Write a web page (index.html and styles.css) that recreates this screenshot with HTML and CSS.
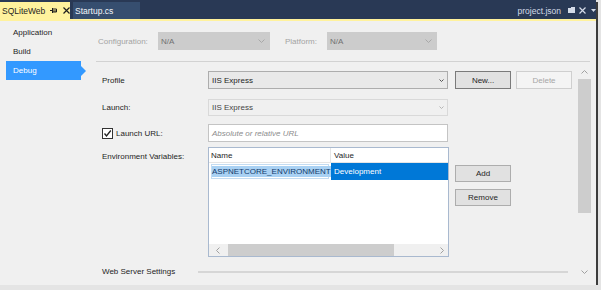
FILE: index.html
```html
<!DOCTYPE html>
<html lang="en">
<head>
  <meta charset="UTF-8" />
  <title>SQLiteWeb - Debug</title>
  <link rel="stylesheet" href="styles.css">
</head>
<body>
  <div class="window">
    <div class="tabbar">
      <div class="tab active">
        <span class="tab-title">SQLiteWeb</span>
        <svg class="pin" width="7" height="7" viewBox="0 0 7 7"><path d="M0 3.5H2.5M2.5 1V6M2.5 2H6.5V5H2.5M2.5 4H6.5" stroke="#1e1e1e" stroke-width="1" fill="none"/></svg>
        <svg class="close" width="7" height="7" viewBox="0 0 7 7"><path d="M0.5 0.5L6.5 6.5M6.5 0.5L0.5 6.5" stroke="#1e1e1e" stroke-width="1.2"/></svg>
      </div>
      <div class="tab plain">Startup.cs</div>
      <div class="spacer"></div>
      <div class="preview">project.json</div>
      <svg class="promote" width="7" height="6" viewBox="0 0 7 6"><path d="M0 1H3V0H7V6H0Z" fill="#d4dbe8"/></svg>
      <svg class="preview-close" width="7" height="7" viewBox="0 0 7 7"><path d="M0.5 0.5L6.5 6.5M6.5 0.5L0.5 6.5" stroke="#d4dbe8" stroke-width="1.2"/></svg>
      <svg class="menu" width="5" height="4" viewBox="0 0 5 4"><path d="M0 0H5L2.5 3Z" fill="#d4dbe8"/></svg>
    </div>

    <div class="main">
      <nav class="nav">
        <div class="nav-item">Application</div>
        <div class="nav-item">Build</div>
        <div class="nav-item selected">Debug</div>
      </nav>

      <div class="page">
        <div class="config-row">
          <div class="config-label">Configuration:</div>
          <div class="combo dark conf">
            <span>N/A</span>
            <svg width="7" height="4" viewBox="0 0 7 4"><path d="M0.5 0.5L3.5 3.5L6.5 0.5" stroke="#a8a8a8" fill="none"/></svg>
          </div>
          <div class="platform-label">Platform:</div>
          <div class="combo dark plat">
            <span>N/A</span>
            <svg width="7" height="4" viewBox="0 0 7 4"><path d="M0.5 0.5L3.5 3.5L6.5 0.5" stroke="#a8a8a8" fill="none"/></svg>
          </div>
        </div>
        <div class="sep"></div>

        <div class="scroll-area">
          <div class="form">
            <div class="row profile">
              <div class="label">Profile</div>
              <div class="combo field">
                <span>IIS Express</span>
                <svg width="5" height="3" viewBox="0 0 5 3"><path d="M0.5 0.5L2.5 2.5L4.5 0.5" stroke="#555" fill="none"/></svg>
              </div>
              <div class="btn default">New...</div>
              <div class="btn disabled">Delete</div>
            </div>

            <div class="row launch">
              <div class="label">Launch:</div>
              <div class="combo field off">
                <span>IIS Express</span>
                <svg width="5" height="3" viewBox="0 0 5 3"><path d="M0.5 0.5L2.5 2.5L4.5 0.5" stroke="#b5b5b5" fill="none"/></svg>
              </div>
            </div>

            <div class="row url">
              <div class="label check-label">
                <span class="checkbox">
                  <svg width="9" height="9" viewBox="0 0 9 9"><path d="M1.5 4.5L3.5 7L7.8 1.5" stroke="#222" stroke-width="1.3" fill="none"/></svg>
                </span>
                <span>Launch URL:</span>
              </div>
              <div class="textbox">Absolute or relative URL</div>
            </div>

            <div class="row env">
              <div class="label env-label">Environment Variables:</div>
              <div class="grid">
                <div class="grid-head">
                  <div class="cell name">Name</div>
                  <div class="cell value">Value</div>
                </div>
                <div class="grid-row">
                  <div class="cell name"><span class="editbox"><span class="sel-text">ASPNETCORE_ENVIRONMENT</span></span></div>
                  <div class="cell value selected">Development</div>
                </div>
                <div class="grid-fill"></div>
                <div class="hscroll">
                  <div class="harrow left">
                    <svg width="4" height="7" viewBox="0 0 4 7"><path d="M3.5 0.5L0.5 3.5L3.5 6.5" stroke="#a0a0a0" fill="none"/></svg>
                  </div>
                  <div class="hthumb"></div>
                  <div class="spacer"></div>
                  <div class="harrow right">
                    <svg width="4" height="7" viewBox="0 0 4 7"><path d="M0.5 0.5L3.5 3.5L0.5 6.5" stroke="#a0a0a0" fill="none"/></svg>
                  </div>
                </div>
              </div>
              <div class="env-buttons">
                <div class="btn">Add</div>
                <div class="btn">Remove</div>
              </div>
            </div>

            <div class="row section">
              <div class="section-label">Web Server Settings</div>
              <div class="section-line"></div>
            </div>
          </div>

          <div class="vscroll">
            <div class="varrow up">
              <svg width="7" height="4" viewBox="0 0 7 4"><path d="M0.5 3.5L3.5 0.5L6.5 3.5" stroke="#a0a0a0" fill="none"/></svg>
            </div>
            <div class="vthumb"></div>
            <div class="spacer"></div>
            <div class="varrow down">
              <svg width="7" height="4" viewBox="0 0 7 4"><path d="M0.5 0.5L3.5 3.5L6.5 0.5" stroke="#a0a0a0" fill="none"/></svg>
            </div>
          </div>
        </div>
      </div>
    </div>
  </div>
</body>
</html>
```

FILE: styles.css
```css
* { box-sizing: border-box; }
body { margin: 0; background: #e4e4e4; font-family: "Liberation Sans", Arial, sans-serif; font-size: 8px; color: #1e1e1e; }
svg { display: block; flex: none; }
.spacer { flex: 1; }

.window { width: 596px; height: 285px; background: #f0f0f0; box-shadow: 2px 2px 0 #3c3c3c; display: flex; flex-direction: column; overflow: hidden; }

/* document tabs */
.tabbar { height: 21px; flex: none; background: #293955; border-bottom: 2px solid #fff29d; display: flex; align-items: flex-end; }
.tab { height: 17px; display: flex; align-items: center; font-size: 8.5px; }
.tab.active { width: 70px; background: #fff29d; padding-left: 2px; }
.tab-title { width: 48px; }
.pin { margin-right: 6px; }
.tab.plain { width: 67px; margin-left: 3px; padding-left: 2px; background: #364e6f; color: #f4f6fa; }
.preview { height: 17px; display: flex; align-items: center; color: #d4dbe8; font-size: 8.5px; margin-right: 7px; }
.promote { margin-bottom: 6px; margin-right: 4px; }
.preview-close { margin-bottom: 5px; margin-right: 5px; }
.menu { margin-bottom: 6px; margin-right: 0; }

.main { flex: 1; display: flex; }

/* left navigation */
.nav { width: 96px; flex: none; padding: 2px 0 0 6px; }
.nav-item { width: 75px; height: 19px; line-height: 19px; padding-left: 7px; }
.nav-item.selected { background: #3399ff; color: #fff; position: relative; }
.nav-item.selected::after { content: ""; position: absolute; left: 100%; top: 5px; border-left: 5px solid #3399ff; border-top: 5px solid transparent; border-bottom: 5px solid transparent; }

.page { flex: 1; display: flex; flex-direction: column; }

/* configuration bar */
.config-row { display: flex; align-items: center; margin-top: 11px; height: 18px; color: #a3a3a3; }
.config-label { width: 62px; padding-left: 2px; }
.platform-label { width: 42px; margin-left: 15px; }
.combo { height: 18px; display: flex; align-items: center; justify-content: space-between; flex: none; }
.combo.dark { background: #cccccc; color: #707070; padding: 0 5px 0 3px; }
.combo.conf { width: 112px; }
.combo.plat { width: 110px; }
.sep { margin: 11px 6px 0 0; height: 1px; background: #d2d2d2; flex: none; }

.scroll-area { flex: 1; display: flex; }
.form { flex: 1; padding-left: 6px; }

.row { display: flex; align-items: center; }
.label { width: 106px; flex: none; }
.combo.field { width: 240px; background: #e9e9e9; border: 1px solid #adadad; padding: 0 3px 0 3px; }
.combo.field.off { height: 17px; background: #f0f0f0; border-color: #d9d9d9; color: #444; }

.btn { width: 56px; height: 18px; flex: none; display: flex; align-items: center; justify-content: center; background: #e1e1e1; border: 1px solid #adadad; margin-left: 7px; }
.btn.default { border-color: #7a7a7a; }
.btn.disabled { margin-left: 5px; background: #f4f4f4; border-color: #cfcfcf; color: #a6a6a6; }

.row.profile { margin-top: 9px; height: 18px; }
.row.launch { margin-top: 10px; height: 17px; }
.row.url { margin-top: 8px; height: 18px; }

.check-label { display: flex; align-items: center; }
.checkbox { width: 11px; height: 11px; background: #fff; border: 1px solid #333; display: flex; align-items: center; justify-content: center; margin-right: 3px; }
.textbox { width: 240px; height: 18px; background: #fff; border: 1px solid #c4c4c4; padding-left: 3px; display: flex; align-items: center; color: #8c8c8c; font-style: italic; }

/* environment variables */
.row.env { margin-top: 5px; height: 110px; align-items: flex-start; }
.env-label { padding-top: 5px; }
.grid { width: 241px; height: 110px; flex: none; background: #fff; border: 1px solid #a9b9cf; display: flex; flex-direction: column; }
.grid-head { height: 15px; display: flex; border-bottom: 1px solid #e5e5e5; flex: none; }
.grid-row { height: 17px; display: flex; flex: none; }
.cell { display: flex; align-items: center; padding-left: 2px; }
.cell.name { width: 122px; border-right: 1px solid #e5e5e5; }
.cell.value { flex: 1; padding-left: 3px; }
.grid-row .cell.name { padding: 1px 1px 1px 2px; border-right: none; }
.editbox { width: 118px; height: 15px; border: 1px solid #c3dcf2; display: flex; align-items: center; }
.sel-text { background: #a9d1f3; color: #123b6b; line-height: 11px; }
.cell.value.selected { background: #0078d7; color: #fff; }
.grid-fill { flex: 1; }
.hscroll { height: 12px; flex: none; background: #f0f0f0; display: flex; align-items: stretch; }
.harrow { width: 18px; display: flex; align-items: center; justify-content: center; }
.harrow.right { width: 13px; }
.hthumb { width: 166px; margin-left: 1px; background: #cdcdcd; }

.env-buttons { display: flex; flex-direction: column; gap: 7px; padding-top: 18px; margin-left: 6px; }
.env-buttons .btn { height: 17px; margin-left: 0; }

/* section header */
.row.section { margin-top: 8px; height: 13px; }
.section-label { width: 96px; flex: none; }
.section-line { flex: 1; height: 2px; background: #d6d6d6; margin-right: 10px; }

/* vertical scrollbar */
.vscroll { width: 13px; margin-right: 5px; flex: none; display: flex; flex-direction: column; align-items: center; }
.varrow.up { padding-top: 8px; height: 17px; }
.vthumb { width: 13px; height: 134px; background: #cdcdcd; flex: none; }
.varrow.down { margin-bottom: 11px; }
```
